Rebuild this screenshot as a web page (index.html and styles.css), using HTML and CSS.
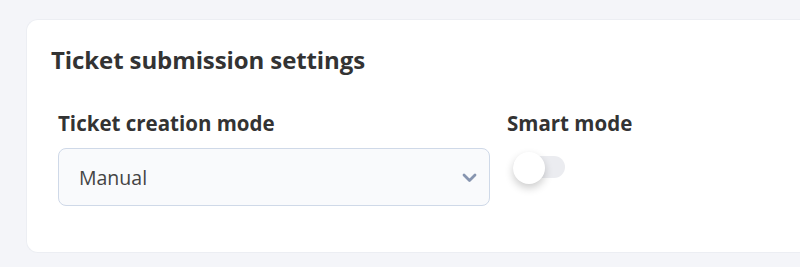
FILE: index.html
```html
<!DOCTYPE html>
<html>
<head>
<meta charset="utf-8">
<link rel="stylesheet" href="styles.css">
</head>
<body>
<div class="page">
  <section class="card">
    <h2 class="card-title">Ticket submission settings</h2>
    <div class="fields">
      <div class="field field-select">
        <label class="field-label">Ticket creation mode</label>
        <div class="select">
          <span class="select-value">Manual</span>
          <svg class="chevron" width="15" height="10" viewBox="0 0 15 10"><path d="M2 2 L7.5 7.5 L13 2" fill="none" stroke="#8795b0" stroke-width="2.8" stroke-linecap="round" stroke-linejoin="round"/></svg>
        </div>
      </div>
      <div class="field field-toggle">
        <label class="field-label">Smart mode</label>
        <div class="toggle">
          <span class="toggle-track"></span>
          <span class="toggle-knob"></span>
        </div>
      </div>
    </div>
  </section>
</div>
</body>
</html>
```
FILE: styles.css
```css
html, body {
  margin: 0;
  padding: 0;
  background: #f4f5f9;
  font-family: "Open Sans", Lato, sans-serif;
  color: #333;
}
.page {
  padding: 19px 0 0 26px;
  overflow: hidden;
  height: 248px;
}
.card {
  background: #fff;
  border: 1px solid #eceef3;
  border-right: none;
  border-radius: 12px 0 0 12px;
  height: 234px;
  box-sizing: border-box;
  padding: 25px 0 0 24px;
}
.card-title {
  margin: 0;
  font-size: 24px;
  font-weight: 700;
  line-height: 30px;
  color: #333;
  letter-spacing: -0.1px;
}
.fields {
  display: flex;
  gap: 17px;
  padding: 35px 0 0 7px;
}
.field {
  display: flex;
  flex-direction: column;
}
.field-select {
  width: 432px;
}
.field-label {
  font-size: 20.5px;
  font-weight: 700;
  line-height: 26px;
  color: #333;
}
.select {
  margin-top: 12px;
  height: 58px;
  box-sizing: border-box;
  border: 1px solid #cfd9e8;
  border-radius: 8px;
  background: #f9fafc;
  display: flex;
  align-items: center;
  justify-content: space-between;
  padding: 0 12px 0 20px;
}
.select-value {
  font-size: 19.5px;
  color: #444;
}
.chevron {
  display: block;
  margin-top: 2px;
}
.toggle {
  position: relative;
  margin-top: 16px;
  margin-left: 6px;
  width: 52px;
  height: 32px;
}
.toggle-track {
  position: absolute;
  left: 0;
  top: 4px;
  width: 52px;
  height: 22px;
  border-radius: 11px;
  background: #ebecf0;
}
.toggle-knob {
  position: absolute;
  left: 0;
  top: 0;
  width: 32px;
  height: 32px;
  border-radius: 50%;
  background: #fff;
  box-shadow: 0 4px 8px rgba(0,0,0,0.2);
}
```
